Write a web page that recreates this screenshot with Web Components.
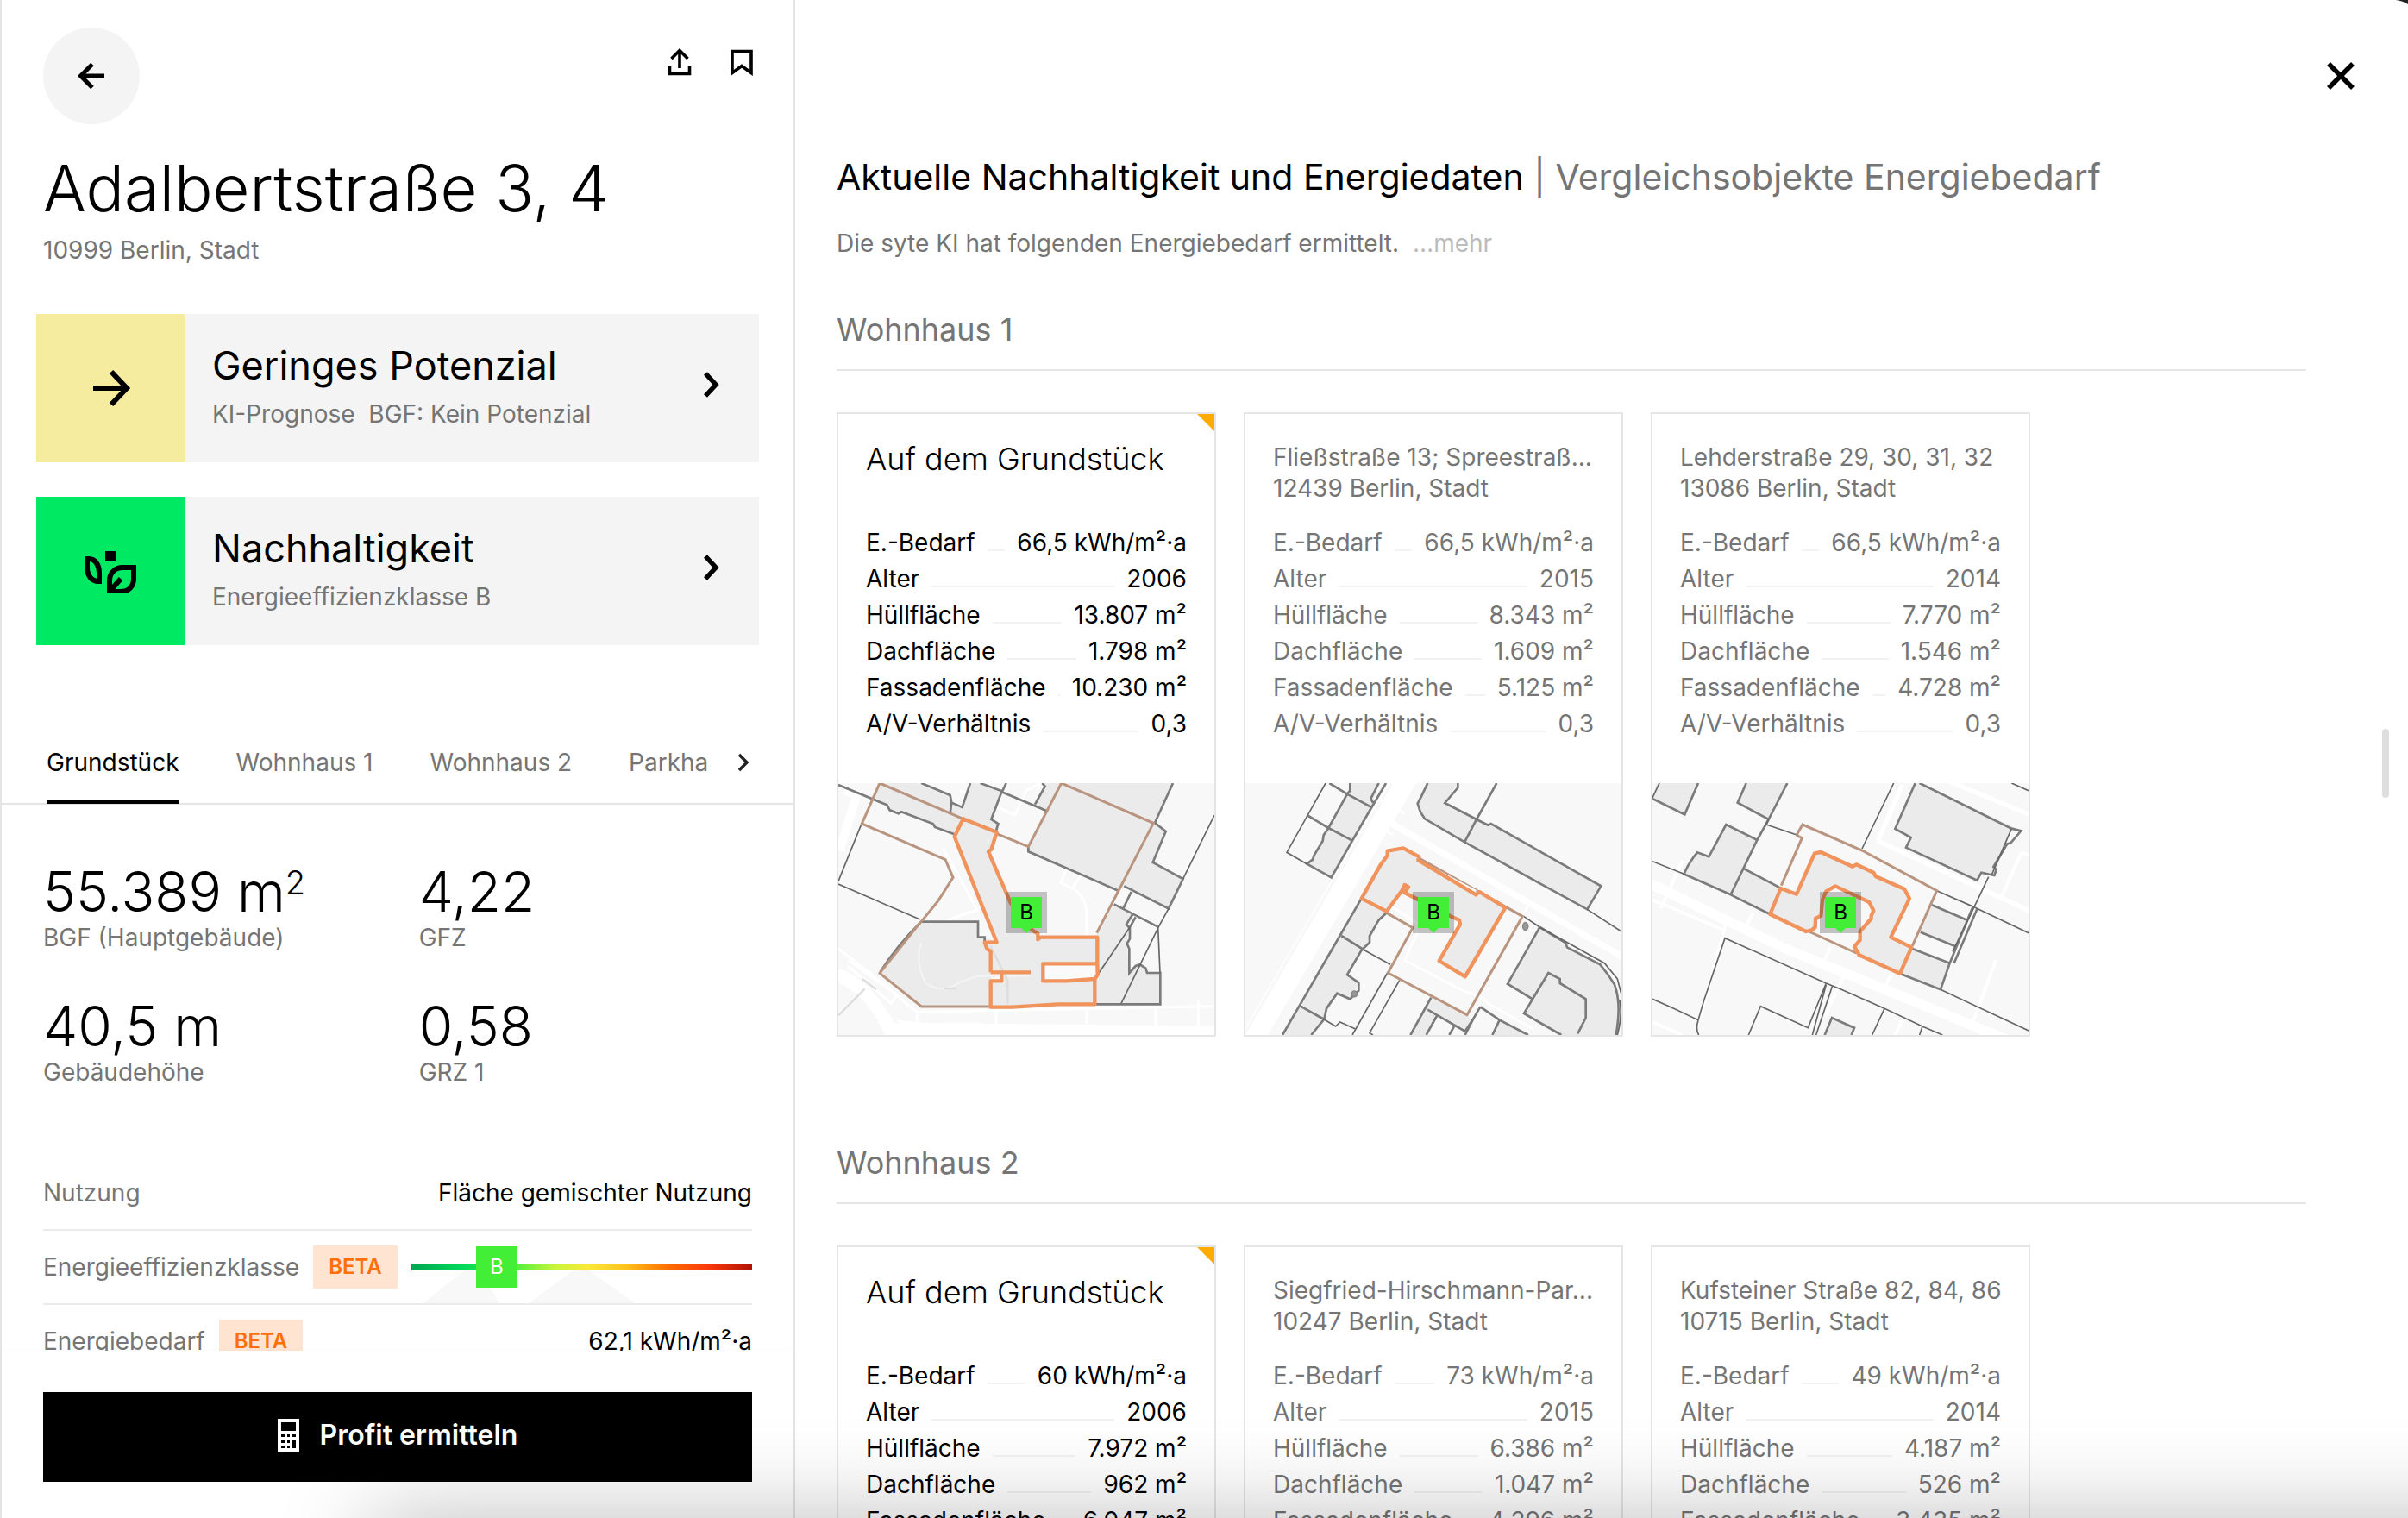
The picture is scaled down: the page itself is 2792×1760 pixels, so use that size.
<!DOCTYPE html>
<html lang="de">
<head>
<meta charset="utf-8">
<title>Adalbertstraße 3, 4</title>
<style>
  :root {
    --ink: #000;
    --muted: #757575;
    --line: #e5e5e5;
    --fs-xs: 24px;
    --fs-s: 28px;
    --fs-m: 36px;
    --fs-l: 41px;
  }
  body {
    margin: 0;
    background: #fff;
    color: var(--ink);
    font: 400 28px/36px Inter, Roboto, "Liberation Sans", sans-serif;
  }
</style>
</head>
<body>
<app-shell>
  <property-sidebar slot="sidebar">
    <insight-card slot="insight" heading="Geringes Potenzial" note="KI-Prognose&nbsp; BGF: Kein Potenzial" tone="#f6eca0">
      <svg width="48" height="48" viewBox="0 0 48 48" fill="none" stroke="#000" stroke-width="6"><path d="M4 24H42M25 5L43 24L25 43"/></svg>
    </insight-card>
    <insight-card slot="insight" heading="Nachhaltigkeit" note="Energieeffizienzklasse B" tone="#00e963">
      <svg width="60" height="52" viewBox="98 637 60 52" fill="none" stroke="#000" stroke-width="6"><path d="M122 640h12v12h-12z" fill="#000" stroke="none"/><path d="M101 649h2c8 0 12 8 12 16v10h-1c-8 0-13-7-13-16z"/><path d="M127 687v-13c0-9 7-15 15-15h13v13c0 9-6 15-15 15z"/><path d="M127 687L140 672"/></svg>
    </insight-card>
    <metric-item slot="metric" label="BGF (Hauptgebäude)">55.389 m<sup>2</sup></metric-item>
    <metric-item slot="metric" label="GFZ">4,22</metric-item>
    <metric-item slot="metric" label="Gebäudehöhe">40,5 m</metric-item>
    <metric-item slot="metric" label="GRZ 1">0,58</metric-item>
    <detail-row slot="detail" label="Nutzung">Fläche gemischter Nutzung</detail-row>
    <detail-row slot="detail" label="Energieeffizienzklasse" beta><energy-scale grade="B"></energy-scale></detail-row>
    <detail-row slot="detail" label="Energiebedarf" beta>62,1 kWh/m²·a</detail-row>
  </property-sidebar>
  <comparison-view slot="content">
    <comparison-section heading="Wohnhaus 1">
      <comparison-card own street="Auf dem Grundstück" values="66,5 kWh/m²·a|2006|13.807 m²|1.798 m²|10.230 m²|0,3" map="a"></comparison-card>
      <comparison-card street="Fließstraße 13; Spreestraß..." town="12439 Berlin, Stadt" values="66,5 kWh/m²·a|2015|8.343 m²|1.609 m²|5.125 m²|0,3" map="b"></comparison-card>
      <comparison-card street="Lehderstraße 29, 30, 31, 32" town="13086 Berlin, Stadt" values="66,5 kWh/m²·a|2014|7.770 m²|1.546 m²|4.728 m²|0,3" map="c"></comparison-card>
    </comparison-section>
    <comparison-section heading="Wohnhaus 2">
      <comparison-card own street="Auf dem Grundstück" values="60 kWh/m²·a|2006|7.972 m²|962 m²|6.047 m²|0,3" map="a"></comparison-card>
      <comparison-card street="Siegfried-Hirschmann-Par..." town="10247 Berlin, Stadt" values="73 kWh/m²·a|2015|6.386 m²|1.047 m²|4.296 m²|0,3" map="b"></comparison-card>
      <comparison-card street="Kufsteiner Straße 82, 84, 86" town="10715 Berlin, Stadt" values="49 kWh/m²·a|2014|4.187 m²|526 m²|3.435 m²|0,3" map="c"></comparison-card>
    </comparison-section>
  </comparison-view>
</app-shell>

<script>
const define = (name, render) => customElements.define(name, class extends HTMLElement {
  constructor() { super(); this.attachShadow({ mode: 'open' }); }
  connectedCallback() {
    this.shadowRoot.innerHTML = '<style>*,:host{box-sizing:border-box}button{font:inherit;color:inherit;border:0;background:none;padding:0;margin:0;cursor:pointer}h1,h2,h3,p,dl,dt,dd{margin:0;font-weight:400}svg{display:block}</style>' + render(this);
  }
});

define('app-shell', () => `
<style>
  :host { display: grid; grid-template-columns: 922px 1fr; height: 100vh; overflow: hidden; position: relative; }
  .shade { position: absolute; top: 100%; left: 430px; right: -200px; height: 200px; box-shadow: 0 0 110px rgba(0,0,0,.26); pointer-events: none; }
  .corner { position: absolute; top: 0; right: 0; }
</style>
<slot name="sidebar"></slot><slot name="content"></slot>
<div class="shade"></div>
<svg class="corner" width="14" height="5" viewBox="0 0 14 5"><path d="M0 0Q8 1 14 5V0z" fill="#222"/></svg>`);

define('property-sidebar', () => `
<style>
  :host { display: grid; grid-template-rows: 1fr auto; min-height: 0; border: solid var(--line); border-width: 0 2px; }
  .scroll { overflow: hidden; min-height: 0; }
  header { display: flex; justify-content: space-between; padding: 32px 40px 0 48px; }
  .back { width: 112px; height: 112px; border-radius: 50%; background: #f4f4f4; display: grid; place-items: center; }
  .actions { display: flex; gap: 32px; padding-top: 20px; }
  .actions button { width: 40px; height: 40px; display: grid; place-items: center; }
  .title { padding: 30px 48px 0; }
  h1 { font-size: 74px; font-weight: 300; line-height: 88px; }
  .title p { margin-top: 10px; color: var(--muted); font-size: var(--fs-s); }
  .insights { display: grid; gap: 40px; padding: 56px 40px 0; }
  nav { display: flex; gap: 66px; height: 73px; margin-top: 112px; padding: 0 50px 0 52px; border-bottom: 2px solid var(--line); color: var(--muted); }
  nav button { height: 72px; padding-bottom: 20px; border-bottom: 4px solid transparent; line-height: 48px; font-size: var(--fs-s); white-space: nowrap; }
  nav button[aria-selected=true] { color: var(--ink); border-color: var(--ink); }
  nav .next { margin-left: -34px; display: grid; place-items: center; color: #222; }
  nav .gap { flex: 1; margin-left: -66px; }
  .metrics { display: grid; grid-template-columns: 53fr 47fr; gap: 50px 0; padding: 66px 48px 0; }
  .details { padding: 80px 48px 0; }
  footer { padding: 48px 48px 42px; background: #fff; box-shadow: 0 -2px 8px rgba(0,0,0,.02); }
  .cta { width: 100%; height: 104px; padding-bottom: 4px; background: #000; color: #fff; display: flex; align-items: center; justify-content: center; gap: 24px; font-weight: 600; font-size: 32px; }
</style>
<div class="scroll">
  <header>
    <button class="back" aria-label="Zurück"><svg width="32" height="32" viewBox="0 0 32 32" fill="none" stroke="#000" stroke-width="5"><path d="M31 16H4M17 2.500L3.500 16L17 29.500"/></svg></button>
    <div class="actions">
      <button aria-label="Teilen"><svg width="28" height="32" viewBox="0 0 28 32" fill="none" stroke="#000" stroke-width="3.600"><path d="M14 23V3M4.500 12L14 2.500L23.500 12M2.500 21V29.500H25.500V21"/></svg></button>
      <button aria-label="Merken"><svg width="28" height="32" viewBox="0 0 28 32" fill="none" stroke="#000" stroke-width="3.600"><path d="M3 3.500H25V28.500L14 20.500L3 28.500z"/></svg></button>
    </div>
  </header>
  <div class="title"><h1>Adalbertstraße 3, 4</h1><p>10999 Berlin, Stadt</p></div>
  <div class="insights"><slot name="insight"></slot></div>
  <nav role="tablist">
    <button role="tab" aria-selected="true">Grundstück</button>
    <button role="tab">Wohnhaus 1</button>
    <button role="tab">Wohnhaus 2</button>
    <button role="tab">Parkha</button>
    <span class="gap"></span>
    <button class="next" aria-label="Weiter"><svg width="18" height="22" viewBox="0 0 18 22" fill="none" stroke="currentColor" stroke-width="3.500"><path d="M4 2L13 11L4 20"/></svg></button>
  </nav>
  <div class="metrics"><slot name="metric"></slot></div>
  <div class="details"><slot name="detail"></slot></div>
</div>
<footer><button class="cta">
  <svg width="25" height="38" viewBox="0 0 25 38"><path d="M0 0h25v38H0z" fill="#fff"/><path d="M4 4h17v10H4zM4 18h4v3H4zM11 18h3v3h-3zM17 18h4v3h-4zM4 25h4v3H4zM11 25h3v3h-3zM17 25h4v9h-4zM4 31h4v3H4zM11 31h3v3h-3z" fill="#000"/></svg>
  <span>Profit ermitteln</span></button></footer>`);

define('insight-card', el => `
<style>
  :host { display: block; }
  button { display: flex; width: 100%; height: 172px; background: #f4f4f4; text-align: left; }
  .icon { width: 172px; height: 172px; display: grid; place-items: center; background: ${el.getAttribute('tone')}; }
  .text { flex: 1; align-self: center; display: grid; gap: 12px; padding: 0 0 4px 32px; }
  .h { font-size: 45px; line-height: 52px; }
  .n { font-size: var(--fs-s); line-height: 36px; color: var(--muted); }
  .chev { align-self: center; margin: 0 40px 8px 0; }
</style>
<button><span class="icon"><slot></slot></span>
<span class="text"><span class="h">${el.getAttribute('heading')}</span><span class="n">${el.getAttribute('note')}</span></span>
<svg class="chev" width="32" height="32" viewBox="0 0 32 32" fill="none" stroke="#000" stroke-width="5.500"><path d="M10 3L22 16L10 29"/></svg></button>`);

define('metric-item', el => `
<style>
  :host { display: block; }
  .v { font-size: 64px; font-weight: 300; line-height: 70px; }
  ::slotted(sup) { font-size: 38px; line-height: 0; vertical-align: 20px; }
  p { color: var(--muted); font-size: var(--fs-s); line-height: 36px; }
</style>
<div class="v"><slot></slot></div><p>${el.getAttribute('label')}</p>`);

define('detail-row', el => `
<style>
  :host { display: flex; align-items: center; gap: 16px; height: 86px; border-bottom: 2px solid #ebebeb; font-size: var(--fs-s); }
  .l { color: var(--muted); white-space: nowrap; }
  .beta { background: #ffe4d2; color: #ff6f0a; font-size: var(--fs-xs); font-weight: 600; line-height: 50px; padding: 0 18px; }
  .v { flex: 1; text-align: right; }
</style>
<span class="l">${el.getAttribute('label')}</span>${el.hasAttribute('beta') ? '<span class="beta">BETA</span>' : ''}<div class="v"><slot></slot></div>`);

define('energy-scale', el => `
<style>
  :host { display: block; position: relative; height: 84px; }
  svg { position: absolute; left: 0; bottom: 0; width: 100%; }
  .bar { position: absolute; inset: 38px 0 auto; height: 8px; background: linear-gradient(90deg,#00a651,#00d95a 15%,#5cf03c 32%,#c8f53c 42%,#fbe93a 52%,#ffc21c 63%,#ff6a00 76%,#fb3a0c 87%,#b01205); }
  .mark { position: absolute; left: 19%; top: 18px; width: 48px; height: 48px; background: #43ee36; color: #fff; font-size: var(--fs-xs); line-height: 48px; text-align: center; }
</style>
<svg height="38" viewBox="0 0 396 38" preserveAspectRatio="none"><path d="M13 38L62 0H80L102 38zM136 38L188 0H206L260 38z" fill="#f8f8f8"/></svg>
<div class="bar"></div><span class="mark">${el.getAttribute('grade')}</span>`);

define('comparison-view', () => `
<style>
  :host { display: flex; position: relative; min-width: 0; overflow: hidden; }
  .content { flex: 1; min-width: 0; padding: 177px 0 0 48px; }
  h1 { font-size: var(--fs-l); line-height: 56px; }
  h1 span { color: var(--muted); }
  .intro { margin-top: 31px; font-size: var(--fs-s); color: var(--muted); }
  .intro button { color: #bbb; margin-left: 8px; }
  .side { width: 118px; padding: 64px 0 0 16px; }
  .side button { width: 48px; height: 48px; display: grid; place-items: center; }
  .thumb { position: absolute; right: 22px; top: 48%; width: 8px; height: 80px; border-radius: 4px; background: #dedede; }
</style>
<div class="content">
  <h1>Aktuelle Nachhaltigkeit und Energiedaten <span>| Vergleichsobjekte Energiebedarf</span></h1>
  <p class="intro">Die syte KI hat folgenden Energiebedarf ermittelt. <button>…mehr</button></p>
  <slot></slot>
</div>
<div class="side"><button aria-label="Schließen"><svg width="32" height="32" viewBox="0 0 32 32" stroke="#000" stroke-width="5.500"><path d="M2 2L30 30M30 2L2 30"/></svg></button></div>
<div class="thumb"></div>`);

define('comparison-section', el => `
<style>
  :host { display: block; margin-top: 58px; }
  :host(:nth-of-type(n+2)) { margin-top: 122px; }
  h2 { font-size: var(--fs-m); line-height: 48px; padding-bottom: 22px; border-bottom: 2px solid var(--line); color: var(--muted); }
  .cards { display: grid; grid-template-columns: repeat(3, 440px); gap: 32px; margin-top: 48px; }
</style>
<h2>${el.getAttribute('heading')}</h2><div class="cards"><slot></slot></div>`);

const LABELS = ['E.-Bedarf', 'Alter', 'Hüllfläche', 'Dachfläche', 'Fassadenfläche', 'A/V-Verhältnis'];
define('comparison-card', el => {
  const own = el.hasAttribute('own'), v = el.getAttribute('values').split('|');
  return `
<style>
  :host { display: block; position: relative; border: 2px solid var(--line); color: ${own ? 'var(--ink)' : 'var(--muted)'}; background: #fff; font-size: var(--fs-s); }
  .flag { position: absolute; top: 0; right: 0; width: 20px; height: 20px; background: #ffab00; clip-path: polygon(0 0, 100% 0, 100% 100%); }
  .body { padding: 32px 32px 48px; }
  h3 { height: 72px; margin-bottom: 24px; font-size: inherit; line-height: 36px; }
  h3 span { display: block; white-space: nowrap; }
  h3.own { font-size: var(--fs-m); line-height: 40px; font-weight: 300; }
  dl div { display: flex; line-height: 42px; white-space: nowrap; }
  dt { flex: 1; display: flex; }
  dt::after { content: ""; flex: 1; height: 2px; margin: 29px 14px 0; background: #f2f2f2; }
</style>
${own ? '<div class="flag"></div>' : ''}
<div class="body">
  <h3 class="${own ? 'own' : ''}"><span>${el.getAttribute('street')}</span>${own ? '' : `<span>${el.getAttribute('town')}</span>`}</h3>
  <dl>${LABELS.map((l, i) => `<div><dt>${l}</dt><dd>${v[i]}</dd></div>`).join('')}</dl>
</div>
<site-map plan="${el.getAttribute('map')}"></site-map>`;
});

/* Parcel plans: r = roads, f = filled buildings, k = building edges, t = thin parcel edges, p = own parcel, o = own building */
const PLANS = {
  a: `
<path class="r" stroke-width="46" d="M30 690C110 720 170 790 215 880L1350 892"/>
<path class="r" stroke-width="30" d="M60 50L100 65L40 260"/>
<path class="r" stroke-width="9" d="M36 600L210 735Q280 800 310 820L1344 800M310 820V880M240 850Q300 865 420 862H530Q550 870 550 900M585 820V880M1140 810V880M1288 780V870M900 860V470Q890 410 850 390L810 370L830 320M850 390L880 345M400 250L520 465Q400 500 340 545Q300 620 330 700Q400 760 470 720L520 690L700 690L900 670M70 640L240 760L220 790L70 660M460 50L650 135L690 50L750 20M1344 130L1240 340"/>
<path class="f" d="M180 24L150 75L205 100L215 118L245 130L255 124L365 165L372 177L440 202L470 148L585 190L592 165L568 150L605 55L520 24H495L467 108L430 92L425 66L325 24z"/>
<path class="f" d="M812 24L697 245L697 262L1010 398L1030 382L1185 460L1235 357L1130 300L1175 192L1137 165L1200 24z"/>
<path class="f" d="M322 506H522V560H545L590 575L440 210L470 148L587 195L565 258L635 440L700 530L735 560H935V548L995 445L1060 480L1040 515L1050 550L1040 580L1048 685L1080 655L1110 684H1156V793H930L565 800H325L180 685z"/>
<path class="f" d="M760 120L745 60L755 24H810zM725 98L755 35L750 24H812L760 120z"/>
<path d="M748 655H935L940 690L928 705L830 712H748zM568 684H604V710H568z" fill="#fafafa"/>
<path d="M1050 490L1150 524L1085 655L1050 680L1040 580z" fill="#f8f8f8"/>
<path d="M325 580Q300 640 340 720Q400 760 460 715L520 695H700" fill="none" stroke="#f4f4f4" stroke-width="6"/>
<path d="M565 590L625 710V790M120 705L168 742M405 738H447M36 832L128 740" fill="none" stroke="#ddd" stroke-width="7"/>
<path class="k" d="M36 30L205 100L215 118L245 130L255 124L365 165L372 177L440 202M325 24L425 66L430 92L467 108L495 24M430 92L425 130M530 24L605 52L568 150L592 165L585 190M620 24L605 55L760 120M720 98L755 35L745 24M697 245V262L1010 398M1200 24L1137 162L1175 192L1130 300L1235 357L1185 460L1030 382M1055 402L1028 458M995 445L1148 524M322 506H522V560H545V575M1060 480L1038 515L1050 530V565L1040 582L1048 600V685L1070 660L1085 655L1105 668L1110 684H1156V793H930M320 510Q240 590 182 680M1070 490L1050 525"/>
<path class="t" d="M115 170L36 365M36 375L320 498M1344 135L1235 357M1185 460L1150 524L1020 790M1148 524L1155 684M1050 525L940 688"/>
<path class="p" d="M180 24L118 165L408 290L435 352L382 435L325 505L312 520L180 685L325 801H565M180 24L470 148M587 200L697 245L812 24L1132 163L1015 390L935 545"/>
<path class="o" d="M470 148L587 195L568 255L558 262L635 440L700 528L730 548V568L740 560H937V652H748V712H830L928 705V793H800L640 803H566V712H604V682H705M566 682V610L553 600L545 578H587L440 210L470 148L500 160M937 652L938 690L928 705M566 682H604"/>`,
  b: `
<path class="r" stroke-width="90" d="M600 0L60 920"/><path d="M545 24L36 890M635 24L120 900" fill="none" stroke="#f8f8f8" stroke-width="10"/>
<path class="r" stroke-width="22" d="M520 150L1350 630"/>
<path class="r" stroke-width="8" d="M480 70L590 130M470 160L550 205M635 540L590 640L800 750Q840 755 880 790L1040 880M540 450L650 520M1020 450L990 500"/>
<path class="f" d="M400 24L390 62L325 180L270 280L250 305L335 352L408 224L475 108L500 24z"/>
<path class="f" d="M670 24L635 95L660 148L800 230L1225 463L1273 382L890 168L840 150L730 93L775 24z"/>
<path class="f" d="M440 425L525 472L500 500L468 575L430 620L390 690L430 722L400 775L355 755L315 830L265 900H165z"/>
<path class="f" d="M530 260L585 250L640 285L845 405L940 457L800 697L710 645L783 510L760 492L590 405L595 380L527 470L440 425z"/>
<path class="f" d="M1060 525L948 722L1035 775L1005 825L1135 900H1330Q1350 760 1290 680Q1270 650 1150 590z"/>
<path class="f" d="M680 770L610 900H660L705 828L765 862L800 887L828 845zM920 848L895 900H1020z"/>
<path class="k" d="M400 24V50L390 62L325 180L308 205L305 225L275 275L270 290L250 305L335 352L408 224L475 108L390 62L328 24M475 108L525 24M500 24L472 78L480 92M325 180L408 224M250 135L325 180M670 24L648 70L635 95L645 125L660 148L800 230L1225 463L1273 382L890 165L880 170L840 150L730 93L775 40V24M910 24L840 150L798 230M438 428L165 900M527 475L500 500L468 555V578L440 605L430 622L390 690L430 718V745L400 775L355 755L318 808L310 845L265 900M370 555L450 605M228 800L305 843M1060 525L948 722L1035 775L1090 684L1130 705V720L1220 775V840L1192 895M1035 775L1005 825L1135 900M1060 525L1150 580L1155 595L1270 655Q1300 690 1320 725Q1345 790 1325 900M682 770L610 900M670 812L800 887L828 845M705 828L665 900M765 865L745 900M828 845L800 900M853 802L920 848L1020 900M853 802L828 845M920 848L895 900"/>
<path class="t" d="M315 24L180 265L250 305M1225 463L1344 540M1005 488L1060 525M450 605L540 655M305 843L350 870L365 855L417 878M530 684L408 900M572 710L468 893L480 900M1060 525L1285 650L1330 705L1344 760M1338 780Q1348 830 1330 900"/>
<ellipse cx="1010" cy="522" rx="9" ry="13" fill="#999" stroke="#888" stroke-width="5"/><circle cx="415" cy="757" r="10" fill="#999" stroke="#888" stroke-width="5"/>
<path class="p" d="M640 285L1000 487L807 830L532 684L618 527L527 475"/>
<path d="M645 293L840 396L836 404z" fill="#fafafa"/>
<path class="o" d="M530 260L585 250L640 280L637 292L838 412L850 402L940 457L800 697L710 642L783 515L780 500L752 488L590 405L603 385L590 378L580 398L555 432L527 470L440 425L505 310L530 275z"/>`,
  c: `
<path class="r" stroke-width="34" d="M20 370L500 600L1350 950"/>
<path class="r" stroke-width="16" d="M1050 10L1350 135M820 225L1350 470M820 225L905 30"/>
<path class="r" stroke-width="11" d="M36 430L285 535M140 295L65 460M295 500L205 830M385 475L365 515M655 595L635 640M870 685L845 730M705 685L635 835M1230 640L1145 870M1320 265L1245 430M1320 265L1350 275M905 845L880 900M36 855L140 900"/>
<path class="f" d="M50 24L36 78L148 133L195 24zM362 24L332 92L440 150L505 24zM292 168L232 280L192 265L145 340L308 412L400 222zM355 322L308 412L445 480L480 388zM950 24L880 183L935 213L918 248L1165 362L1180 335L1225 345L1285 182L1318 190L965 24z"/>
<path class="f" d="M1008 448L968 542L1090 592L1130 500zM940 600L900 688L1038 742L1070 650zM660 840L635 900H725L738 875z"/>
<path class="f" d="M600 268L622 262L735 315L745 308L810 345L912 392L930 425L865 560L937 595L897 686L755 622L738 592L758 545L797 490L805 468L790 438L672 382L640 400L625 430L622 485L600 500L600 525L570 540L445 480L480 388L537 410z"/>
<path class="k" d="M36 78L148 133L195 24M362 24L332 92L440 150L505 24M440 150L400 222L292 168L232 280L192 265L180 280L160 310L145 340L308 412L400 222M355 322L480 388M308 412L445 480M950 24L880 183L935 213L918 248L1165 362L1180 335L1225 345L1232 325L1222 315L1270 235L1282 232L1318 190L1285 182L965 24M1008 448L1130 500M968 542L1090 592M940 600L1070 650M900 688L1038 742M635 900L660 840L738 875L728 900M1150 455L1070 650L1038 742M1165 462L1085 650"/>
<path class="t" d="M60 24L36 75M440 150L432 168L540 205M875 24L765 252M1025 398L1155 455L1344 545M1285 24L1344 50M1205 350L1155 455M1285 182L1215 345M36 296L145 340M1155 455L1080 610M36 775L110 808L195 848L215 780L288 563L640 720L690 740L843 808L975 870L1045 900M195 848Q185 880 197 900M640 720L577 875L412 800L370 900M640 725L592 900M662 728L605 900M843 808L800 900M975 870L965 900M1038 742L1344 885"/>
<path class="p" d="M537 205L558 168L765 258L1025 398L940 590M537 205L556 215L484 380M580 540L745 615"/>
<path class="o" d="M600 268L622 264L732 314L745 307L805 335L812 348L912 392L930 425L865 560L937 595L897 686L755 622L738 592L758 570V540L797 495V485L805 468L790 438L672 382L640 400L627 430L622 485L603 495L602 525L590 535L570 540L445 480L482 390L537 410z"/>`
};
define('site-map', el => `
<style>
  :host { display: grid; background: #f8f8f8; }
  svg, .pin { grid-area: 1 / 1; }
  svg { width: 100%; height: auto; }
  .r { fill: none; stroke: #fff; }
  .f { fill: #ebebeb; }
  .k { fill: none; stroke: #7b7b7b; stroke-width: 8; }
  .t { fill: none; stroke: #666; stroke-width: 5; }
  .p { fill: none; stroke: #b9957f; stroke-width: 9; }
  .o { fill: none; stroke: #f0935c; stroke-width: 13; stroke-linejoin: round; }
  .pin { place-self: center; margin-top: 8px; width: 48px; height: 48px; padding: 6px; background: rgba(0,0,0,.22); color: #000; position: relative; }
  .pin b { display: block; height: 36px; background: #43ee36; font-weight: 400; font-size: var(--fs-xs); line-height: 36px; text-align: center; }
  .pin::after { content: ""; position: absolute; left: 18px; bottom: 0; border: 6px solid transparent; border-top-color: #43ee36; border-bottom: 0; }
</style>
<svg viewBox="36 24 1308 876">${PLANS[el.getAttribute('plan')]}</svg>
<div class="pin"><b>B</b></div>`);
</script>
</body>
</html>
